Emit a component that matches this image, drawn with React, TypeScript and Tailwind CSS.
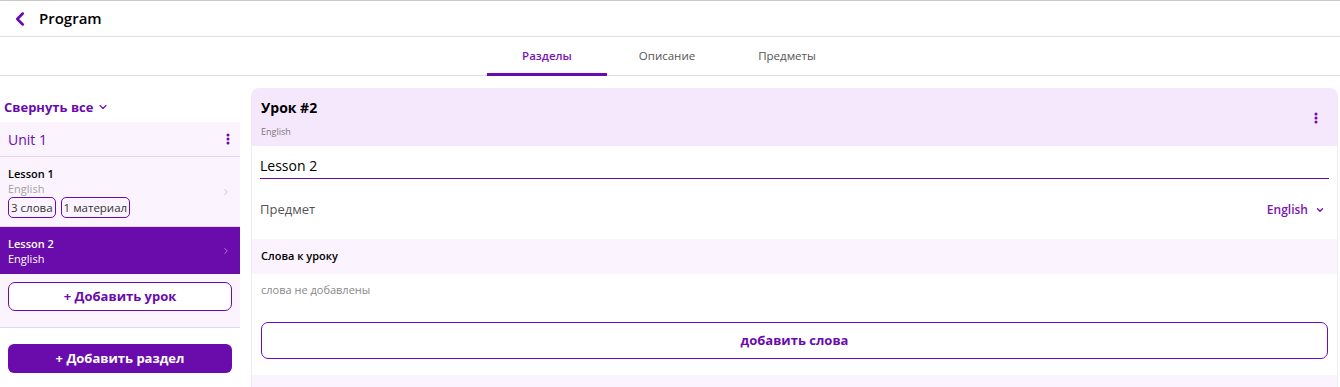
import { ChevronLeft, ChevronDown, ChevronRight } from "lucide-react";

const PURPLE = "#6a0bab";

function Kebab({ className = "" }: { className?: string }) {
  return (
    <svg width="4" height="12" viewBox="0 0 4 12" className={className}>
      <circle cx="2" cy="2" r="1.5" fill={PURPLE} />
      <circle cx="2" cy="6" r="1.5" fill={PURPLE} />
      <circle cx="2" cy="10" r="1.5" fill={PURPLE} />
    </svg>
  );
}

export default function App() {
  return (
    <div className="w-[1340px] h-[387px] overflow-hidden bg-white border-t border-[#c9c9c9] font-['Open_Sans',sans-serif] text-black">
      {/* Header */}
      <div className="h-[36px] flex items-center border-b border-[#e8dcf3]">
        <ChevronLeft className="ml-[9px] w-[22px] h-[22px] text-[#6a0bab]" strokeWidth={2.8} />
        <span className="ml-[8px] text-[15px] font-semibold">Program</span>
      </div>

      {/* Tabs */}
      <div className="h-[39px] flex justify-center border-b border-[#dedede] pr-[6px]">
        <div className="w-[120px] flex items-center justify-center text-[11.5px] font-semibold text-[#7a14b4] border-b-[3px] border-[#6a0bab] -mb-px pt-[2px]">Разделы</div>
        <div className="w-[120px] flex items-center justify-center text-[11.5px] font-medium text-[#555]">Описание</div>
        <div className="w-[120px] flex items-center justify-center text-[11.5px] font-medium text-[#555]">Предметы</div>
      </div>

      <div className="flex gap-[11px] pr-[2px]">
        {/* Sidebar */}
        <div className="w-[240px] shrink-0">
          <div className="h-[46px] flex items-end pb-[5px] pl-[4px]">
            <span className="text-[13px] font-bold text-[#6a0bab]">Свернуть все</span>
            <ChevronDown className="ml-[4px] mb-[4px] w-[12px] h-[12px] text-[#6a0bab]" strokeWidth={2.2} />
          </div>
          <div className="bg-[#fbf3fd]">
            <div className="h-[35px] flex items-center justify-between pl-[8px] pr-[10px] border-b border-[#e6d4f0]">
              <span className="text-[14px] font-medium text-[#6a0bab]">Unit 1</span>
              <Kebab />
            </div>
            <div className="h-[70px] flex items-center justify-between pl-[8px] pr-[9px] border-b border-[#e6d4f0]">
              <div className="flex flex-col pt-[1px]">
                <span className="text-[11px] leading-[15px] font-semibold">Lesson 1</span>
                <span className="text-[11px] leading-[15px] text-[#a3a3a3]">English</span>
                <div className="flex gap-[5px] mt-[1px]">
                  <span className="text-[11.5px] leading-[19px] px-[2px] border border-[#6a0bab] rounded-[5px] text-[#333]">3 слова</span>
                  <span className="text-[11.5px] leading-[19px] px-[2px] border border-[#6a0bab] rounded-[5px] text-[#333]">1 материал</span>
                </div>
              </div>
              <ChevronRight className="w-[10px] h-[10px] text-[#c6b0d6]" strokeWidth={2} />
            </div>
            <div className="h-[47px] flex items-center justify-between pl-[8px] pr-[9px] bg-[#6a0bab] text-white">
              <div className="flex flex-col">
                <span className="text-[11px] leading-[15px] font-semibold">Lesson 2</span>
                <span className="text-[11px] leading-[15px]">English</span>
              </div>
              <ChevronRight className="w-[10px] h-[10px] text-[#b98ad8]" strokeWidth={2} />
            </div>
            <div className="px-[8px] pt-[8px] pb-[16px] border-b border-[#e6d4f0]">
              <button className="w-full h-[29px] rounded-[7px] border border-[#6a0bab] bg-white text-[13px] font-bold text-[#6a0bab]">+ Добавить урок</button>
            </div>
          </div>
          <div className="px-[8px] pt-[16px]">
            <button className="w-full h-[29px] rounded-[6px] bg-[#6a0bab] text-[13px] font-bold text-white">+ Добавить раздел</button>
          </div>
        </div>

        {/* Main panel */}
        <div className="flex-1 mt-[12px] rounded-t-[8px] border-l border-r border-[#efe9f3] overflow-hidden">
          <div className="h-[58px] bg-[#f6e8fc] flex justify-between pl-[9px] pr-[19px]">
            <div className="flex flex-col pt-[10px]">
              <span className="text-[14px] leading-[19px] font-bold">Урок #2</span>
              <span className="mt-[9px] text-[9px] leading-[12px] text-[#777]">English</span>
            </div>
            <div className="flex items-center pt-[2px]"><Kebab /></div>
          </div>
          <div className="px-[8px]">
            <div className="h-[33px] border-b border-[#6a0bab] flex items-end pb-[2px]">
              <span className="text-[14px]">Lesson 2</span>
            </div>
            <div className="h-[60px] flex items-center justify-between pr-[4px]">
              <span className="text-[13px] text-[#555] pt-[1px]">Предмет</span>
              <div className="flex items-center gap-[7px] pt-[1px]">
                <span className="text-[12px] font-semibold text-[#7a14b4]">English</span>
                <ChevronDown className="w-[10px] h-[10px] text-[#6a0bab]" strokeWidth={3} />
              </div>
            </div>
          </div>
          <div className="h-[35px] bg-[#fbf3fd] flex items-center pl-[9px]">
            <span className="text-[11px] font-semibold">Слова к уроку</span>
          </div>
          <div className="px-[9px] pt-[2px] pb-[16px]">
            <span className="text-[11px] text-[#888]">слова не добавлены</span>
            <button className="mt-[22px] w-full h-[37px] rounded-[7px] border border-[#6a0bc9] bg-white text-[13px] font-bold text-[#6a0bab]">добавить слова</button>
          </div>
          <div className="h-[30px] bg-[#fbf3fd]" />
        </div>
      </div>
    </div>
  );
}
